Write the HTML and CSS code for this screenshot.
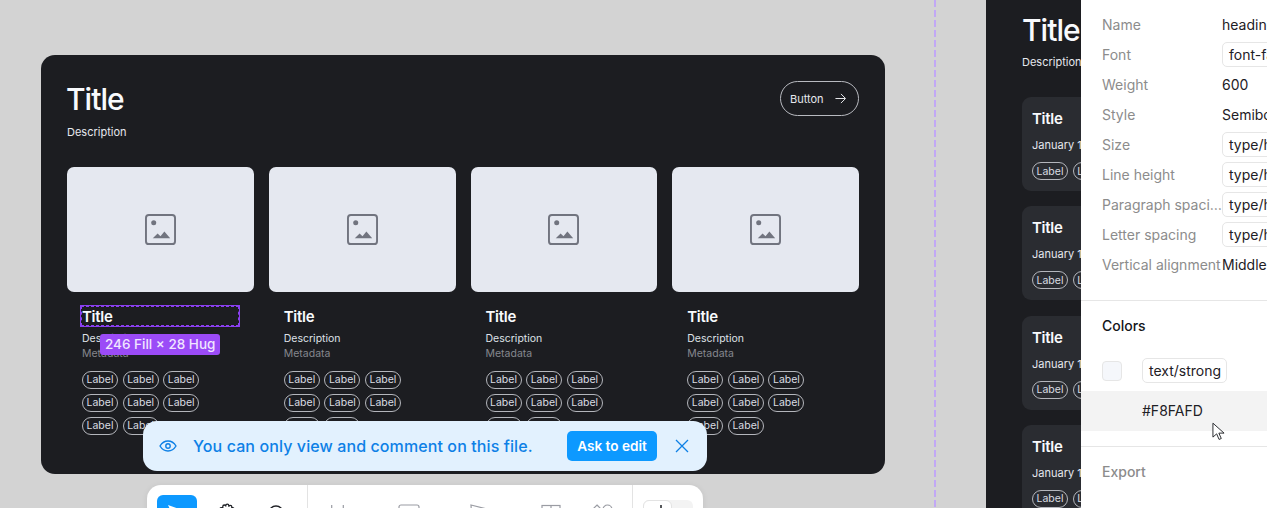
FILE: index.html
```html
<!DOCTYPE html>
<html lang="en">
<head>
<meta charset="utf-8">
<title>Design file</title>
<link rel="stylesheet" href="styles.css">
</head>
<body>
<svg class="sprite" width="0" height="0" aria-hidden="true">
  <symbol id="img" viewBox="0 0 32 32">
    <rect x="1" y="1" width="30" height="30" rx="3" fill="none" stroke="#71747f" stroke-width="2"/>
    <circle cx="9" cy="9" r="2.6" fill="#71747f"/>
    <path d="M8 25l5-5 3 3 4-5 6 7z" fill="#71747f"/>
  </symbol>
</svg>
<div class="canvas">
  <div class="guide"></div>

  <section class="frame">
    <header class="frame-head">
      <div>
        <h1 class="frame-title">Title</h1>
        <p class="frame-desc">Description</p>
      </div>
      <button class="cta">Button
        <svg width="11" height="11" viewBox="0 0 12 12"><path d="M0.500 6h10.500M6.500 1l5 5-5 5" fill="none" stroke="#f8fafd" stroke-width="1"/></svg>
      </button>
    </header>
    <div class="cards">
      <article class="card">
        <div class="thumb"><svg class="thumb-icon"><use href="#img"/></svg></div>
        <div class="card-body">
          <div class="title-wrap selected"><h2 class="card-title">Title</h2><span class="size-badge">246 Fill × 28 Hug</span></div>
          <p class="card-desc">Description</p>
          <p class="card-meta">Metadata</p>
          <div class="tags"><span class="tag">Label</span><span class="tag">Label</span><span class="tag">Label</span><span class="tag">Label</span><span class="tag">Label</span><span class="tag">Label</span><span class="tag">Label</span><span class="tag">Label</span></div>
        </div>
      </article>
      <article class="card">
        <div class="thumb"><svg class="thumb-icon"><use href="#img"/></svg></div>
        <div class="card-body">
          <div class="title-wrap"><h2 class="card-title">Title</h2></div>
          <p class="card-desc">Description</p>
          <p class="card-meta">Metadata</p>
          <div class="tags"><span class="tag">Label</span><span class="tag">Label</span><span class="tag">Label</span><span class="tag">Label</span><span class="tag">Label</span><span class="tag">Label</span><span class="tag">Label</span><span class="tag">Label</span></div>
        </div>
      </article>
      <article class="card">
        <div class="thumb"><svg class="thumb-icon"><use href="#img"/></svg></div>
        <div class="card-body">
          <div class="title-wrap"><h2 class="card-title">Title</h2></div>
          <p class="card-desc">Description</p>
          <p class="card-meta">Metadata</p>
          <div class="tags"><span class="tag">Label</span><span class="tag">Label</span><span class="tag">Label</span><span class="tag">Label</span><span class="tag">Label</span><span class="tag">Label</span><span class="tag">Label</span><span class="tag">Label</span></div>
        </div>
      </article>
      <article class="card">
        <div class="thumb"><svg class="thumb-icon"><use href="#img"/></svg></div>
        <div class="card-body">
          <div class="title-wrap"><h2 class="card-title">Title</h2></div>
          <p class="card-desc">Description</p>
          <p class="card-meta">Metadata</p>
          <div class="tags"><span class="tag">Label</span><span class="tag">Label</span><span class="tag">Label</span><span class="tag">Label</span><span class="tag">Label</span><span class="tag">Label</span><span class="tag">Label</span><span class="tag">Label</span></div>
        </div>
      </article>
    </div>
  </section>

  <div class="notice">
    <svg class="eye" width="18" height="12" viewBox="0 0 18 12"><path d="M1 6c2-3.300 4.700-5 8-5s6 1.700 8 5c-2 3.300-4.700 5-8 5s-6-1.700-8-5z" fill="none" stroke="#0d80e6" stroke-width="1.400"/><circle cx="9" cy="6" r="2.200" fill="none" stroke="#0d80e6" stroke-width="1.400"/></svg>
    <span class="notice-text">You can only view and comment on this file.</span>
    <button class="ask">Ask to edit</button>
    <svg class="close" width="14" height="14" viewBox="0 0 14 14"><path d="M1 1l12 12M13 1L1 13" stroke="#0d80e6" stroke-width="1.300" fill="none"/></svg>
  </div>

  <nav class="toolbar">
    <div class="tool-group first">
      <span class="tool active"><svg width="20" height="20" viewBox="0 0 20 20"><path d="M1 2l14 5-5.500 2L7 15z" fill="#fff"/></svg></span>
      <span class="tool"><svg width="20" height="20" viewBox="0 0 20 20"><path d="M3 13V6a1.400 1.400 0 0 1 2.800 0V3.500a1.500 1.500 0 0 1 3 0V2.600a1.500 1.500 0 0 1 3 0v1.200a1.500 1.500 0 0 1 3 0V5a1.400 1.400 0 0 1 2.200 1v8" stroke="#1e2025" stroke-width="1.300" fill="none"/></svg></span>
      <span class="tool"><svg width="20" height="20" viewBox="0 0 20 20"><circle cx="9" cy="10" r="7" fill="none" stroke="#1e2025" stroke-width="1.400"/></svg></span>
    </div>
    <div class="tool-group second">
      <span class="tool faded"><svg width="20" height="20" viewBox="0 0 20 20"><path d="M3.700 1v18M15.300 1v18M0 7h20" stroke="#9a9ca3" stroke-width="1.200" fill="none"/></svg></span>
      <span class="tool faded"><svg width="22" height="20" viewBox="0 0 22 20"><rect x="1" y="1" width="20" height="18" rx="2" fill="none" stroke="#9a9ca3" stroke-width="1.200"/></svg></span>
      <span class="tool faded"><svg width="20" height="20" viewBox="0 0 20 20"><path d="M1 1l16 4v14H2z" fill="none" stroke="#9a9ca3" stroke-width="1.200"/></svg></span>
      <span class="tool faded"><svg width="20" height="20" viewBox="0 0 20 20"><rect x="1" y="1.500" width="18" height="18" fill="none" stroke="#9a9ca3" stroke-width="1.200"/><path d="M1 5.500h18M10 1.500v4" stroke="#9a9ca3" stroke-width="1.200"/></svg></span>
      <span class="tool faded last"><svg width="22" height="20" viewBox="0 0 22 20"><path d="M6 1l4.500 4.500L6 10 1.500 5.500z" fill="none" stroke="#9a9ca3" stroke-width="1.200"/><circle cx="16.500" cy="5.500" r="4.500" fill="none" stroke="#9a9ca3" stroke-width="1.200"/></svg></span>
    </div>
    <div class="tool-group third">
      <div class="switch"><span class="switch-on"><svg width="10" height="14" viewBox="0 0 10 14"><path d="M5 3v9" stroke="#1e2025" stroke-width="1.500"/></svg></span></div>
    </div>
  </nav>

  <section class="mobile">
    <h1 class="mobile-title">Title</h1>
    <p class="mobile-desc">Description</p>
    <div class="mobile-list">
      <div class="row-card"><h2 class="card-title">Title</h2><p class="row-date">January 1</p><div class="row-tags"><span class="tag">Label</span><span class="tag">Label</span></div></div>
      <div class="row-card"><h2 class="card-title">Title</h2><p class="row-date">January 1</p><div class="row-tags"><span class="tag">Label</span><span class="tag">Label</span></div></div>
      <div class="row-card"><h2 class="card-title">Title</h2><p class="row-date">January 1</p><div class="row-tags"><span class="tag">Label</span><span class="tag">Label</span></div></div>
      <div class="row-card"><h2 class="card-title">Title</h2><p class="row-date">January 1</p><div class="row-tags"><span class="tag">Label</span><span class="tag">Label</span></div></div>
    </div>
  </section>

  <aside class="panel">
    <dl class="props">
      <div class="prop"><dt>Name</dt><dd>heading</dd></div>
      <div class="prop"><dt>Font</dt><dd><span class="chip">font-family</span></dd></div>
      <div class="prop"><dt>Weight</dt><dd>600</dd></div>
      <div class="prop"><dt>Style</dt><dd>Semibold</dd></div>
      <div class="prop"><dt>Size</dt><dd><span class="chip">type/heading</span></dd></div>
      <div class="prop"><dt>Line height</dt><dd><span class="chip">type/heading</span></dd></div>
      <div class="prop"><dt>Paragraph spacing</dt><dd><span class="chip">type/heading</span></dd></div>
      <div class="prop"><dt>Letter spacing</dt><dd><span class="chip">type/heading</span></dd></div>
      <div class="prop"><dt>Vertical alignment</dt><dd>Middle</dd></div>
    </dl>
    <div class="colors">
      <h3 class="colors-head">Colors</h3>
      <div class="color-row"><span class="swatch"></span><span class="chip chip-color">text/strong</span></div>
      <div class="hex-row">#F8FAFD</div>
    </div>
    <div class="export">Export</div>
    <svg class="cursor" width="13" height="20" viewBox="0 0 14 21"><path d="M1 1v15l4-3.500 2.600 6 2.400-1-2.600-5.800H13z" fill="#fff" stroke="#1e2025" stroke-width="1"/></svg>
  </aside>
</div>
</body>
</html>
```
FILE: styles.css
```css
* { box-sizing: border-box; }
html, body { margin: 0; padding: 0; }
body { width: 1267px; height: 508px; overflow: hidden; font-family: Inter, "Liberation Sans", sans-serif; background: #d3d3d3; }
h1, h2, h3, p, dl, dd { margin: 0; }
button { font-family: inherit; }
.sprite { position: absolute; }
.canvas { position: relative; width: 1267px; height: 508px; overflow: hidden; }

.guide { position: absolute; left: 934px; top: 0; bottom: 0; width: 2px; background: repeating-linear-gradient(to bottom, #c2a8f5 0 7px, transparent 7px 10px); }

.frame { position: absolute; left: 41px; top: 55px; width: 844px; height: 419px; background: #1c1d21; border-radius: 14px; padding: 25px 26px; color: #f8fafd; }
.frame-head { display: flex; justify-content: space-between; align-items: flex-start; height: 87px; }
.frame-title { font-size: 30px; line-height: 38px; font-weight: 500; letter-spacing: -1px; margin-left: -1px; }
.frame-desc { font-size: 11px; line-height: 16px; margin-top: 6px; color: #e6e8ee; }
.cta { display: flex; align-items: center; justify-content: space-between; width: 79px; height: 35px; margin-top: 1px; padding: 0 12px 0 9px; background: transparent; border: 1px solid #b8bac0; border-radius: 18px; color: #e6e8ee; font-size: 11px; }

.cards { display: grid; grid-template-columns: repeat(4, 1fr); gap: 15px; }
.thumb { height: 124.500px; background: #e5e8f0; border-radius: 7px; display: flex; align-items: center; justify-content: center; }
.thumb-icon { width: 31px; height: 31px; }
.card-body { padding: 14.500px 15px 0; }
.title-wrap { position: relative; height: 20px; display: flex; align-items: center; }
.selected { outline: 1px solid #8a3ff0; outline-offset: 0; border: 1px dashed #8a3ff0; margin: 0 0 0 -1px; }
.card-title { padding-top: 2px; font-size: 15px; line-height: 22px; font-weight: 600; letter-spacing: -0.3px; color: #f8fafd; }
.size-badge { position: absolute; left: 18px; top: 27px; height: 21px; padding: 0 5px; background: #9b4bf7; border-radius: 3px; color: #f0e6ff; font-size: 13.500px; line-height: 21px; font-weight: 500; white-space: nowrap; letter-spacing: 0; }
.card-desc { font-size: 10.500px; line-height: 15px; margin-top: 5px; color: #dfe1e7; }
.card-meta { font-size: 10.500px; line-height: 15px; color: #85878e; }
.tags { display: flex; flex-wrap: wrap; gap: 5px 4.600px; margin-top: 9.500px; width: 130px; }
.tag { display: inline-flex; align-items: center; justify-content: center; width: 36px; height: 18px; border: 1px solid #b4b6bc; border-radius: 9px; color: #dadce2; font-size: 10.500px; flex: none; }

.notice { position: absolute; left: 143px; top: 421px; width: 564px; height: 50px; display: flex; align-items: center; padding: 0 18px 0 16px; background: #e2f1fe; border-radius: 14px; }
.eye { flex: none; }
.notice-text { margin-left: 16px; font-size: 16px; font-weight: 500; color: #0d80e6; letter-spacing: 0.1px; white-space: nowrap; flex: 1; }
.ask { width: 90px; height: 30px; padding: 0; background: #0d99ff; border: 0; border-radius: 5px; color: #fff; font-size: 13.600px; font-weight: 600; }
.close { margin-left: 18px; flex: none; }

.toolbar { position: absolute; left: 147px; top: 485px; width: 556px; height: 60px; display: flex; background: #fff; border-radius: 14px; box-shadow: 0 1px 6px rgba(0,0,0,.08); }
.tool-group { display: flex; align-items: flex-start; }
.first { width: 161px; padding: 10px 0 0 10px; gap: 10px; border-right: 1px solid #e3e3e3; }
.second { width: 325px; padding: 19px 0 0; gap: 11px; border-right: 1px solid #e3e3e3; }
.third { padding: 15px 0 0 10px; }
.tool { width: 40px; height: 40px; display: flex; justify-content: center; padding-top: 8px; flex: none; }
.tool.active { background: #0d99ff; border-radius: 6px; }
.tool.faded { width: 60px; height: 20px; padding-top: 0; }
.tool.last { margin-left: -20px; }
.switch { width: 50px; height: 24px; background: #f3f3f3; border-radius: 6px; }
.switch-on { display: flex; width: 29px; height: 24px; background: #fff; border: 1px solid #e3e3e3; border-radius: 6px; padding: 1px 0 0 12px; }

.mobile { position: absolute; left: 986px; top: 0; width: 281px; height: 508px; background: #1c1d21; padding: 11px 36px 0; color: #f8fafd; }
.mobile-title { font-size: 30px; line-height: 38px; font-weight: 500; letter-spacing: -1px; }
.mobile-desc { font-size: 11px; line-height: 16px; margin-top: 5px; white-space: nowrap; color: #e6e8ee; }
.mobile-list { display: flex; flex-direction: column; gap: 15.300px; margin-top: 27px; }
.row-card { height: 94px; background: #2a2c31; border-radius: 9px; padding: 9px 10px 10px; }
.row-date { font-size: 11px; line-height: 16px; margin-top: 7px; color: #e6e8ee; white-space: nowrap; }
.row-tags { display: flex; gap: 4.600px; margin-top: 9px; }

.panel { position: absolute; left: 1081px; top: 0; width: 186px; height: 508px; background: #fff; overflow: hidden; font-size: 14px; color: #1e2025; }
.props { padding: 9px 0 0 21px; }
.prop { display: flex; height: 30px; align-items: center; white-space: nowrap; }
.prop dt { width: 120px; color: #8c8c8c; flex: none; overflow: hidden; text-overflow: ellipsis; }
.chip { display: inline-block; height: 25px; line-height: 23px; padding: 0 5px 0 6px; border: 1px solid #e6e6e6; border-radius: 5px; }
.colors { margin-top: 21px; border-top: 1px solid #e6e6e6; }
.colors-head { font-size: 14px; font-weight: 500; line-height: 20px; padding: 15px 0 0 21px; color: #14161a; }
.color-row { display: flex; align-items: center; gap: 20px; padding: 22px 0 0 21px; }
.swatch { width: 20px; height: 20px; background: #f5f7fb; border: 1px solid #e6e6e6; border-radius: 4px; }
.hex-row { height: 40px; margin-top: 8px; line-height: 40px; padding-left: 61px; background: #f3f3f3; }
.export { margin-top: 15px; border-top: 1px solid #e6e6e6; padding: 15px 0 0 21px; line-height: 20px; font-weight: 500; color: #8c8c8c; }
.cursor { position: absolute; left: 131px; top: 422px; }
```
